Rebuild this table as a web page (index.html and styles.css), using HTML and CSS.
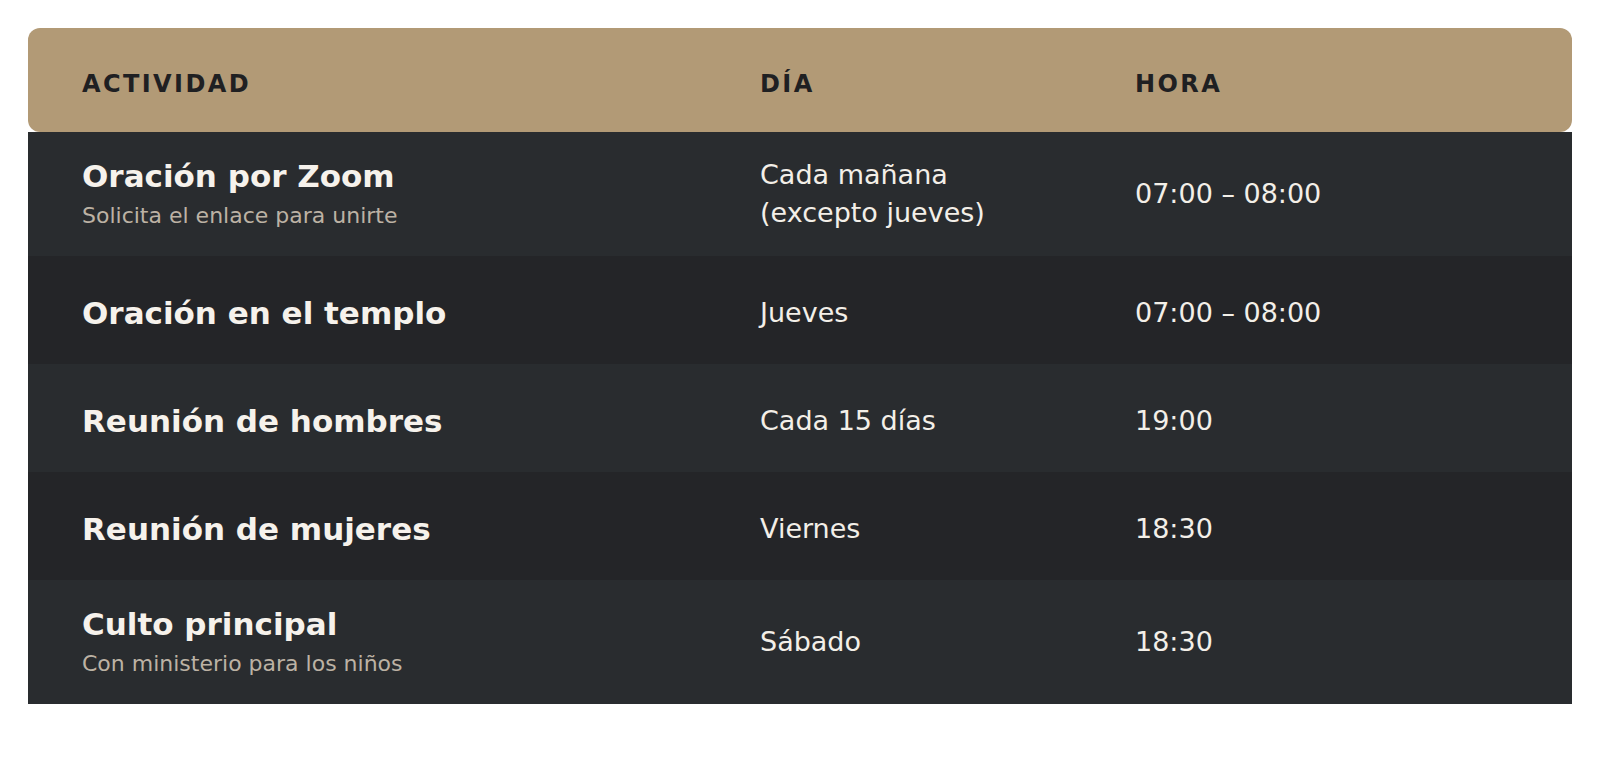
FILE: index.html
```html
<!DOCTYPE html>
<html lang="es">
<head>
<meta charset="utf-8">
<link rel="stylesheet" href="styles.css">
</head>
<body>
<table class="schedule">
  <colgroup>
    <col class="c1"><col class="c2"><col class="c3">
  </colgroup>
  <thead>
    <tr><th>Actividad</th><th>Día</th><th>Hora</th></tr>
  </thead>
  <tbody>
    <tr class="odd tall">
      <td><div class="title">Oración por Zoom</div><div class="sub">Solicita el enlace para unirte</div></td>
      <td>Cada mañana<br>(excepto jueves)</td>
      <td>07:00 – 08:00</td>
    </tr>
    <tr class="even">
      <td><div class="title">Oración en el templo</div></td>
      <td>Jueves</td>
      <td>07:00 – 08:00</td>
    </tr>
    <tr class="odd">
      <td><div class="title">Reunión de hombres</div></td>
      <td>Cada 15 días</td>
      <td>19:00</td>
    </tr>
    <tr class="even">
      <td><div class="title">Reunión de mujeres</div></td>
      <td>Viernes</td>
      <td>18:30</td>
    </tr>
    <tr class="odd tall">
      <td><div class="title">Culto principal</div><div class="sub">Con ministerio para los niños</div></td>
      <td>Sábado</td>
      <td>18:30</td>
    </tr>
  </tbody>
</table>
</body>
</html>
```
FILE: styles.css
```css
html, body {
  margin: 0;
  padding: 0;
  background: #ffffff;
}
body {
  padding: 28px 28px 0 28px;
  font-family: "DejaVu Sans", sans-serif;
}
.schedule {
  border-collapse: separate;
  border-spacing: 0;
  width: 1544px;
  table-layout: fixed;
}
.c1 { width: 678px; }
.c2 { width: 375px; }
.c3 { width: 491px; }
.schedule th {
  background: #b29a76;
  color: #1f2022;
  text-align: left;
  text-transform: uppercase;
  font-size: 24px;
  font-weight: bold;
  letter-spacing: 0.1em;
  line-height: 1.3;
  height: 104px;
  padding: 9px 0 0 54px;
  box-sizing: border-box;
  vertical-align: middle;
}
.schedule th:first-child { border-top-left-radius: 12px; border-bottom-left-radius: 12px; }
.schedule th:last-child { border-top-right-radius: 12px; border-bottom-right-radius: 12px; }
.schedule td {
  padding: 6px 0 0 54px;
  height: 108px;
  box-sizing: border-box;
  vertical-align: middle;
  color: #f3efe8;
  font-size: 27px;
  line-height: 1.4;
}
.schedule tr.tall td { height: 124px; padding-top: 0; }
.schedule tr.odd td { background: #292c2f; }
.schedule tr.even td { background: #242528; }
.title {
  font-size: 31px;
  font-weight: bold;
  line-height: 1.3;
  color: #f6f2ec;
}
.sub {
  margin-top: 2px;
  font-size: 22px;
  line-height: 1.5;
  color: #bcb2a4;
}
```
